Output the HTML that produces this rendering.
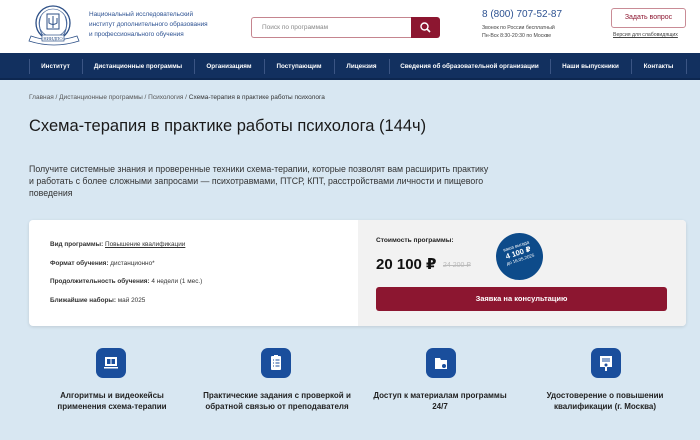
<!DOCTYPE html>
<html><head><meta charset="utf-8"><style>
*{margin:0;padding:0;box-sizing:border-box}
body{width:700px;height:440px;overflow:hidden;background:#d8e7f2;font-family:"Liberation Sans","DejaVu Sans",sans-serif;color:#222;position:relative}
.a{position:absolute}
.hdr{left:0;top:0;width:700px;height:53px;background:#fff}
.nav{left:0;top:53px;width:700px;height:27px;background:#12305f;border-bottom:2px solid #0d2750}
.nav span{position:absolute;top:0;height:27px;line-height:27px;color:#fff;font-size:6.3px;font-weight:bold;text-align:center}
.sep{position:absolute;top:6px;width:1px;height:15px;background:#3b5584}
.feat{font-size:8px;font-weight:bold;text-align:center;line-height:11px;color:#222}
.ic{width:30px;height:30px;background:#1a4e9c;border-radius:7px}
</style></head><body>
<div class="a hdr"></div>
<svg class="a" style="left:28px;top:2px" width="54" height="46" viewBox="0 0 54 46">
<ellipse cx="25" cy="21" rx="17" ry="17" fill="none" stroke="#2c4f86" stroke-width="1.3"/>
<ellipse cx="25" cy="21" rx="14" ry="14" fill="none" stroke="#2c4f86" stroke-width="0.6"/>
<path d="M13 14 q-4 10 2 20 M37 14 q4 10 -2 20" stroke="#4a6ba0" fill="none" stroke-width="1"/>
<rect x="19" y="12" width="12" height="15" fill="none" stroke="#2c4f86" stroke-width="1"/>
<path d="M21 16 v5 q4 3 8 0 v-5 M25 14 v12" stroke="#2c4f86" fill="none" stroke-width="1"/>
<path d="M3 34 q22 8 46 0 l2 5 q-25 8 -50 0z" fill="#fff" stroke="#2c4f86" stroke-width="0.8"/>
<rect x="14" y="33" width="22" height="6" fill="#fff" stroke="#2c4f86" stroke-width="0.7"/>
<text x="25" y="38" font-size="4.5" text-anchor="middle" fill="#2c4f86" font-family="Liberation Serif">НИИДПО</text>
</svg>
<div class="a" style="left:89px;top:10px;font-size:6.4px;line-height:10px;color:#2d5292">Национальный исследовательский<br>институт дополнительного образования<br>и профессионального обучения</div>
<div class="a" style="left:251px;top:17px;width:160px;height:21px;border:1px solid #c5858f;border-right:none;border-radius:3px 0 0 3px;background:#fff;font-size:6.5px;color:#888;padding-left:10px;line-height:19px">Поиск по программам</div>
<div class="a" style="left:411px;top:17px;width:29px;height:21px;background:#8c1630;border-radius:0 3px 3px 0"></div>
<svg class="a" style="left:419px;top:21px" width="13" height="13" viewBox="0 0 13 13"><circle cx="5.5" cy="5.5" r="3.5" fill="none" stroke="#fff" stroke-width="1.4"/><path d="M8 8l3 3" stroke="#fff" stroke-width="1.6"/></svg>
<div class="a" style="left:482px;top:9px;font-size:10px;color:#2d5292">8 (800) 707-52-87</div>
<div class="a" style="left:482px;top:24px;font-size:5.2px;line-height:8px;color:#444">Звонок по России бесплатный<br>Пн-Вск 8:30-20:30 по Москве</div>
<div class="a" style="left:611px;top:8px;width:75px;height:20px;border:1px solid #c98c96;border-radius:3px;font-size:7px;color:#8c1630;text-align:center;line-height:18px">Задать вопрос</div>
<div class="a" style="left:613px;top:32px;font-size:5.2px;color:#444;text-decoration:underline">Версия для слабовидящих</div>
<div class="a nav">
<div class="sep" style="left:29px"></div>
<span style="left:29px;width:53px">Институт</span><div class="sep" style="left:82px"></div>
<span style="left:82px;width:112px">Дистанционные программы</span><div class="sep" style="left:194px"></div>
<span style="left:194px;width:70px">Организациям</span><div class="sep" style="left:264px"></div>
<span style="left:264px;width:70px">Поступающим</span><div class="sep" style="left:334px"></div>
<span style="left:334px;width:55px">Лицензия</span><div class="sep" style="left:389px"></div>
<span style="left:389px;width:161px">Сведения об образовательной организации</span><div class="sep" style="left:550px"></div>
<span style="left:550px;width:81px">Наши выпускники</span><div class="sep" style="left:631px"></div>
<span style="left:631px;width:55px">Контакты</span><div class="sep" style="left:686px"></div>
</div>
<div class="a" style="left:29px;top:94px;font-size:6.5px;color:#555">Главная / Дистанционные программы / Психология / <b style="color:#333;font-weight:normal">Схема-терапия в практике работы психолога</b></div>
<div class="a" style="left:29px;top:117px;font-size:16.5px;color:#1a1a1a">Схема-терапия в практике работы психолога (144ч)</div>
<div class="a" style="left:29px;top:163px;font-size:8.8px;line-height:12px;color:#333;width:462px">Получите системные знания и проверенные техники схема-терапии, которые позволят вам расширить практику и работать с более сложными запросами — психотравмами, ПТСР, КПТ, расстройствами личности и пищевого поведения</div>
<div class="a" style="left:29px;top:220px;width:657px;height:106px;background:#fff;border-radius:4px;box-shadow:0 1px 3px rgba(0,0,0,.12);overflow:hidden">
<div class="a" style="left:329px;top:0;width:328px;height:106px;background:#f2f2f2"></div>
</div>
<div class="a" style="left:50px;top:236px;font-size:6.4px;line-height:18.5px;color:#333">
<div><b>Вид программы:</b> <u>Повышение квалификации</u></div>
<div><b>Формат обучения:</b> дистанционно*</div>
<div><b>Продолжительность обучения:</b> 4 недели (1 мес.)</div>
<div><b>Ближайшие наборы:</b> май 2025</div></div>
<div class="a" style="left:376px;top:237px;font-size:6.6px;font-weight:bold;color:#222">Стоимость программы:</div>
<div class="a" style="left:376px;top:255px;font-size:15px;font-weight:bold;color:#111">20 100 ₽</div>
<div class="a" style="left:443px;top:261px;font-size:7px;color:#bbb;text-decoration:line-through">24 200 ₽</div>
<div class="a" style="left:496px;top:233px;width:47px;height:47px;border-radius:50%;background:#0d4b8a;color:#fff;text-align:center;transform:rotate(-18deg);padding-top:10px">
<div style="font-size:4.5px">ваша выгода</div><div style="font-size:7.5px;font-weight:bold">4 100 ₽</div><div style="font-size:4.5px">до 16.05.2025</div></div>
<div class="a" style="left:376px;top:287px;width:291px;height:24px;background:#8c1630;border-radius:3px;color:#fff;font-size:7.5px;font-weight:bold;text-align:center;line-height:24px">Заявка на консультацию</div>
<div class="a ic" style="left:96px;top:348px"></div>
<svg class="a" style="left:101px;top:353px" width="20" height="20" viewBox="0 0 20 20"><rect x="4" y="4" width="12" height="9" fill="#fff"/><rect x="6" y="6" width="8" height="5" fill="#1a4e9c"/><path d="M10 6v5" stroke="#fff"/><rect x="3" y="14" width="14" height="1.5" fill="#fff"/></svg>
<div class="a ic" style="left:261px;top:348px"></div>
<svg class="a" style="left:266px;top:353px" width="20" height="20" viewBox="0 0 20 20"><rect x="5" y="3" width="10" height="14" rx="1" fill="#fff"/><rect x="8" y="2" width="4" height="2" fill="#fff"/><path d="M7 7h1M7 10h1M7 13h1M9.5 7h4M9.5 10h4M9.5 13h4" stroke="#1a4e9c"/></svg>
<div class="a ic" style="left:426px;top:348px"></div>
<svg class="a" style="left:431px;top:353px" width="20" height="20" viewBox="0 0 20 20"><path d="M4 5h5l1 2h6v9H4z" fill="#fff"/><circle cx="13" cy="13" r="2.5" fill="#1a4e9c" stroke="#fff"/></svg>
<div class="a ic" style="left:591px;top:348px"></div>
<svg class="a" style="left:596px;top:353px" width="20" height="20" viewBox="0 0 20 20"><rect x="4" y="3" width="12" height="11" fill="#fff"/><path d="M6 6h8M6 8h8" stroke="#1a4e9c"/><circle cx="10" cy="12" r="2" fill="#1a4e9c" stroke="#fff"/><path d="M9 14v4h2v-4" fill="#fff"/></svg>
<div class="a feat" style="left:42px;top:390px;width:140px">Алгоритмы и видеокейсы<br>применения схема-терапии</div>
<div class="a feat" style="left:192px;top:390px;width:170px">Практические задания с проверкой и<br>обратной связью от преподавателя</div>
<div class="a feat" style="left:365px;top:390px;width:150px">Доступ к материалам программы<br>24/7</div>
<div class="a feat" style="left:530px;top:390px;width:150px">Удостоверение о повышении<br>квалификации (г. Москва)</div>
</body></html>
